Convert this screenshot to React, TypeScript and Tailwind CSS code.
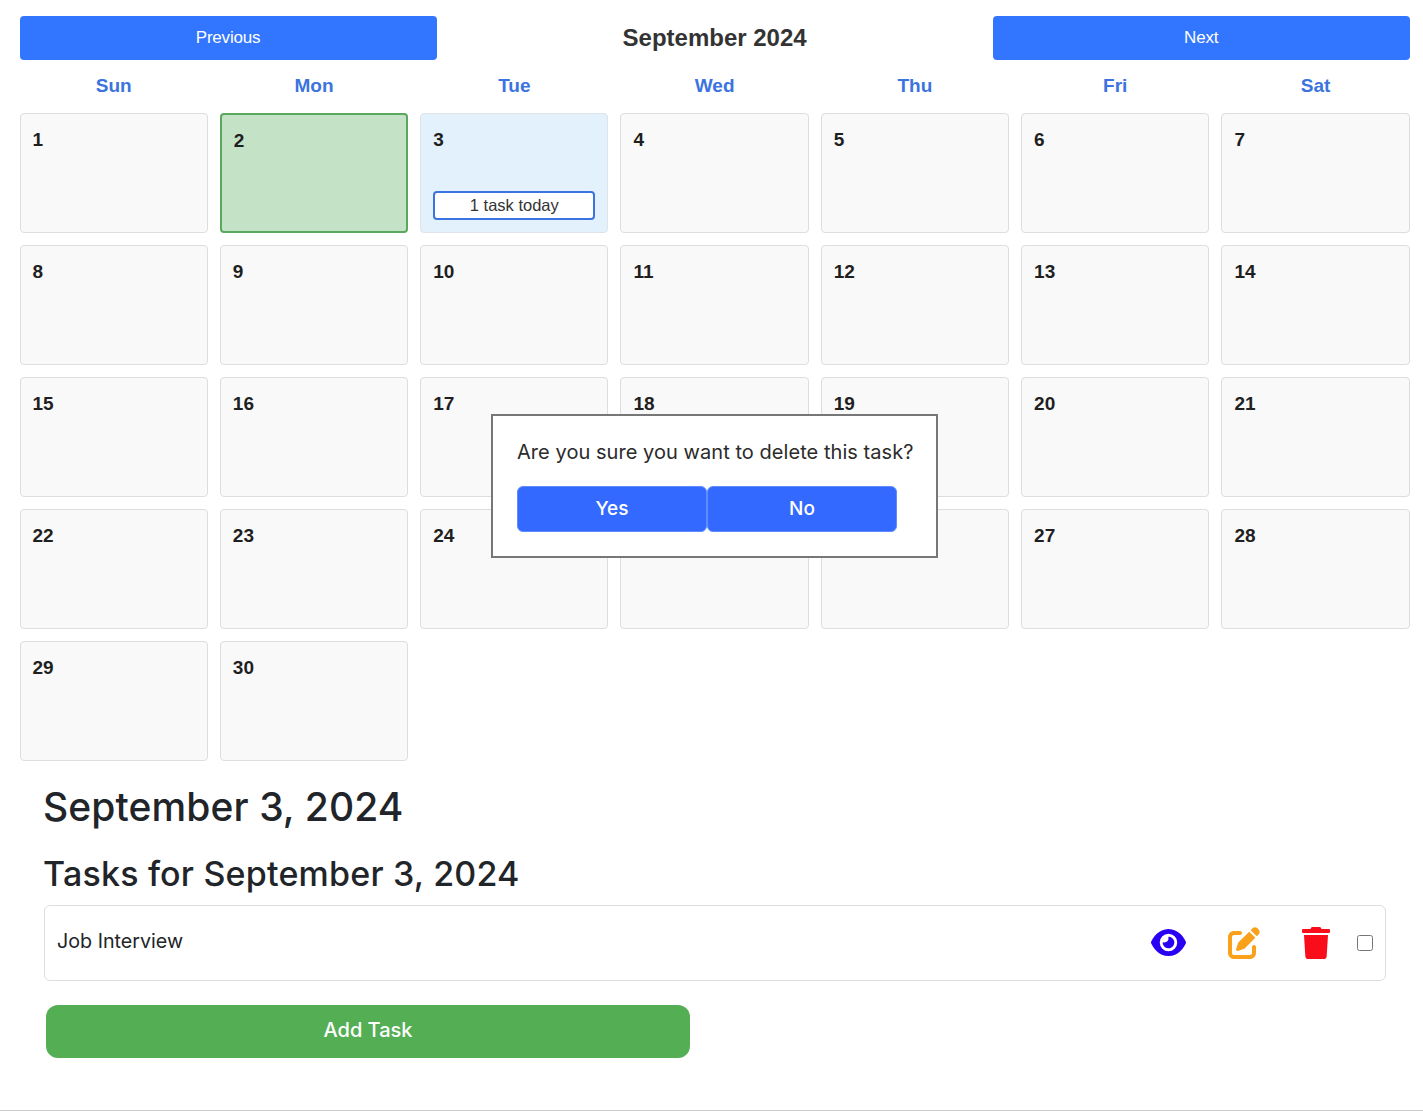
import { FaTrash } from "react-icons/fa";
import { FaEye, FaPenToSquare } from "react-icons/fa6";

const weekDays = ["Sun", "Mon", "Tue", "Wed", "Thu", "Fri", "Sat"];
const days = Array.from({ length: 30 }, (_, i) => i + 1);

function DayCell({ day }: { day: number }) {
  if (day === 2) {
    return (
      <div className="h-[120px] rounded-[4px] border-2 border-[#5aa85e] bg-[#c4e2c6] px-3 pt-[13px] text-[19px] leading-[26px] font-bold text-[#1f1f1f]">
        {day}
      </div>
    );
  }
  if (day === 3) {
    return (
      <div className="flex h-[120px] flex-col justify-between rounded-[4px] border border-[#dde3e8] bg-[#e3f1fc] px-3 pt-[13px] pb-3 text-[19px] leading-[26px] font-bold text-[#1f1f1f]">
        {day}
        <div className="h-[29px] rounded-[4px] border-2 border-[#3b73e0] bg-white text-center text-[16.5px] leading-[25px] font-normal text-[#333]">
          1 task today
        </div>
      </div>
    );
  }
  return (
    <div className="h-[120px] rounded-[4px] border border-[#ddd] bg-[#f9f9f9] px-3 pt-[13px] text-[19px] leading-[26px] font-bold text-[#1f1f1f]">
      {day}
    </div>
  );
}

export default function App() {
  return (
    <div className="relative h-[1111px] border-b border-[#ccc] bg-white font-['Liberation_Sans',sans-serif]">
      <div className="pt-4 pr-[13.3px] pl-[19.55px]">
        <div className="flex items-center justify-between">
          <button className="h-11 w-[417px] rounded-[4px] bg-[#3276ff] text-[17px] tracking-[-0.2px] text-white">Previous</button>
          <h2 className="text-[24px] font-bold text-[#333]">September 2024</h2>
          <button className="h-11 w-[417px] rounded-[4px] bg-[#3276ff] text-[17px] tracking-[-0.2px] text-white">Next</button>
        </div>

        <div className="mt-[11px] grid grid-cols-7 gap-3">
          {weekDays.map((d) => (
            <div key={d} className="h-[30px] text-center text-[19px] leading-[29px] font-bold text-[#3b73e0]">{d}</div>
          ))}
        </div>

        <div className="mt-3 grid grid-cols-7 gap-3">
          {days.map((d) => (
            <DayCell key={d} day={d} />
          ))}
        </div>
      </div>

      <div className="pr-[37px] pl-11 font-['Inter',sans-serif]">
        <h1 className="mt-[19px] -ml-px text-[39px] leading-[54px] font-medium tracking-[0.1px] text-[#212529]">September 3, 2024</h1>
        <h2 className="mt-5 -ml-px text-[34px] leading-[40px] font-medium tracking-[0.2px] text-[#212529]">Tasks for September 3, 2024</h2>
        <div className="mt-[11px] flex h-[76px] items-center rounded-[6px] border border-[#ddd] pr-3 pl-3">
          <span className="mb-[3px] flex-1 text-[19.7px] text-[#212529]">Job Interview</span>
          <FaEye className="mr-[42px] mb-px text-[35px] text-[#2a00f5]" />
          <FaPenToSquare className="mr-[40px] mb-px text-[32px] text-[#f9a11b]" />
          <FaTrash className="mr-[25px] mb-px text-[32px] text-[#f90d1b]" />
          <input type="checkbox" className="mb-px h-4 w-4" />
        </div>
        <button className="mt-6 ml-[2px] h-[53px] w-[644px] rounded-[12px] bg-[#54ae54] pb-1 text-[20px] font-medium text-white">Add Task</button>
      </div>

      <div className="absolute top-[414px] left-[491px] h-[144px] w-[447px] border-2 border-[#777] bg-white pt-6 pl-6 font-['Inter',sans-serif]">
        <p className="-mt-px text-[20px] leading-[26px] tracking-[0.05px] whitespace-nowrap text-[#2b2b2b]">Are you sure you want to delete this task?</p>
        <div className="mt-[21px] flex">
          <button className="h-[46px] w-[190px] rounded-[6px] border border-[#5f8cff] bg-[#3369ff] text-[19px] font-medium text-white">Yes</button>
          <button className="h-[46px] w-[190px] rounded-[6px] border border-[#5f8cff] bg-[#3369ff] text-[19px] font-medium text-white">No</button>
        </div>
      </div>
    </div>
  );
}
